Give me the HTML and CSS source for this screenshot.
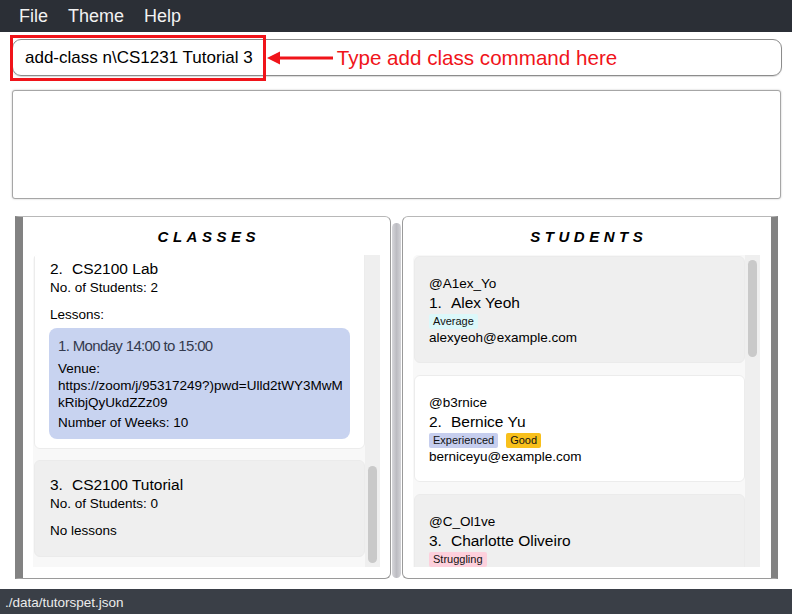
FILE: index.html
```html
<!DOCTYPE html>
<html lang="en">
<head>
<meta charset="utf-8">
<title>TutorsPet</title>
<link rel="stylesheet" href="styles.css">
</head>
<body>
<div class="app">
  <nav class="menubar">
    <span class="menu-item">File</span>
    <span class="menu-item">Theme</span>
    <span class="menu-item">Help</span>
  </nav>

  <div class="command-box">
    <div class="command-highlight">add-class n\CS1231 Tutorial 3</div>
    <svg class="arrow" width="66" height="14" viewBox="0 0 66 14" aria-hidden="true">
      <polygon points="0,7 13,0.5 13,13.5" fill="#f0141a"/>
      <line x1="12" y1="7" x2="66" y2="7" stroke="#f0141a" stroke-width="3"/>
    </svg>
    <span class="annotation">Type add class command here</span>
  </div>

  <div class="result-display"></div>

  <main class="panels">
    <section class="panel panel-left">
      <h2 class="panel-title">CLASSES</h2>
      <div class="list">
        <div class="list-viewport">
          <div class="list-content scrolled">
            <article class="card card-white">
              <div class="card-title"><span class="idx">2.</span>CS2100 Lab</div>
              <div class="line">No. of Students: 2</div>
              <div class="line lessons-label">Lessons:</div>
              <div class="lesson">
                <div class="lesson-time">1. Monday 14:00 to 15:00</div>
                <div class="line venue-label">Venue:</div>
                <div class="line url">https://zoom/j/95317249?)pwd=Ulld2tWY3MwMkRibjQyUkdZZz09</div>
                <div class="line weeks">Number of Weeks: 10</div>
              </div>
            </article>
            <article class="card card-gray">
              <div class="card-title"><span class="idx">3.</span>CS2100 Tutorial</div>
              <div class="line">No. of Students: 0</div>
              <div class="line lessons-label no-lessons">No lessons</div>
            </article>
          </div>
        </div>
        <div class="scrollbar scrollbar-end"><div class="thumb"></div></div>
      </div>
    </section>

    <div class="splitter"></div>

    <section class="panel panel-right">
      <h2 class="panel-title">STUDENTS</h2>
      <div class="list">
        <div class="list-viewport">
          <div class="list-content">
            <article class="card card-gray student">
              <div class="line">@A1ex_Yo</div>
              <div class="card-title"><span class="idx">1.</span>Alex Yeoh</div>
              <div class="tags"><span class="tag tag-average">Average</span></div>
              <div class="line">alexyeoh@example.com</div>
            </article>
            <article class="card card-white student">
              <div class="line">@b3rnice</div>
              <div class="card-title"><span class="idx">2.</span>Bernice Yu</div>
              <div class="tags"><span class="tag tag-experienced">Experienced</span><span class="tag tag-good">Good</span></div>
              <div class="line">berniceyu@example.com</div>
            </article>
            <article class="card card-gray student">
              <div class="line">@C_Ol1ve</div>
              <div class="card-title"><span class="idx">3.</span>Charlotte Oliveiro</div>
              <div class="tags"><span class="tag tag-struggling">Struggling</span></div>
            </article>
          </div>
        </div>
        <div class="scrollbar scrollbar-start"><div class="thumb"></div></div>
      </div>
    </section>
  </main>

  <footer class="statusbar">./data/tutorspet.json</footer>
</div>
</body>
</html>
```

FILE: styles.css
```css
* {
  box-sizing: border-box;
}

html, body {
  margin: 0;
  padding: 0;
  background: #ffffff;
}

body {
  font-family: "Liberation Sans", Arial, sans-serif;
  color: #000;
}

.app {
  width: 792px;
  height: 614px;
  display: flex;
  flex-direction: column;
  overflow: hidden;
}

/* Menu bar */
.menubar {
  height: 32px;
  flex: 0 0 32px;
  background: #2b2f36;
  display: flex;
  align-items: center;
  padding-left: 9px;
}

.menu-item {
  color: #f2f2f2;
  font-size: 18px;
  padding: 0 10px;
  line-height: 32px;
}

/* Command box */
.command-box {
  height: 37px;
  flex: 0 0 37px;
  margin: 7px 10px 0 12px;
  border: 1px solid #8c8c8c;
  border-radius: 9px;
  box-shadow: 0 1px 1px rgba(0, 0, 0, 0.15);
  display: flex;
  align-items: center;
}

.command-highlight {
  height: 46px;
  flex: 0 0 auto;
  margin-left: -3px;
  border: 3px solid #f0141a;
  padding: 0 10px 0 12px;
  display: flex;
  align-items: center;
  font-size: 17px;
  color: #000;
  white-space: nowrap;
}

.arrow {
  display: block;
  margin-left: 1px;
  flex: 0 0 auto;
}

.annotation {
  margin-left: 4px;
  font-size: 20.6px;
  color: #f0141a;
  white-space: nowrap;
}

/* Result display */
.result-display {
  height: 109px;
  flex: 0 0 109px;
  margin: 14px 11px 0 12px;
  border: 1px solid #a6a6a6;
  border-radius: 3px;
  box-shadow: 0 0 2px rgba(0, 0, 0, 0.25);
  background: #fff;
}

/* Panels */
.panels {
  height: 363px;
  flex: 0 0 363px;
  margin-top: 17px;
  padding: 0 14px 0 15px;
  display: flex;
}

.panel {
  width: 376px;
  flex: 0 0 376px;
  display: flex;
  flex-direction: column;
  background: #fff;
}

.panel-left {
  border-left: 8px solid #828282;
  border-top: 1px solid #b8b8b8;
  border-right: 1px solid #9a9a9a;
  border-bottom: 1px solid #9a9a9a;
  border-radius: 0 6px 6px 0;
  padding: 0 10px 11px 10px;
}

.panel-right {
  border-right: 7px solid #828282;
  border-top: 1px solid #b8b8b8;
  border-left: 1px solid #9a9a9a;
  border-bottom: 1px solid #9a9a9a;
  border-radius: 6px 0 0 6px;
  padding: 0 11px 11px 10px;
}

.splitter {
  width: 9px;
  flex: 0 0 9px;
  margin: 7px 1px 1px 1px;
  border-radius: 5px;
  background: linear-gradient(to right, #d6d6da, #bcbcc2 50%, #d2d2d6);
}

.panel-title {
  margin: 0;
  height: 38px;
  flex: 0 0 38px;
  display: flex;
  align-items: center;
  justify-content: center;
  padding-left: 4.5px;
  font-size: 15px;
  font-weight: bold;
  font-style: italic;
  letter-spacing: 4.5px;
  color: #000;
}

.list {
  height: 312px;
  flex: 0 0 312px;
  display: flex;
  background: #f8f8f8;
  border-radius: 5px 0 0 0;
  overflow: hidden;
}

.list-viewport {
  flex: 1;
  overflow: hidden;
  padding-left: 1px;
}

.list-content {
  display: flex;
  flex-direction: column;
  gap: 11px;
}

.list-content.scrolled {
  margin-top: -11px;
}

.panel-right .list-content {
  gap: 12px;
  padding-top: 1px;
}

.scrollbar {
  width: 15px;
  flex: 0 0 15px;
  background: #efefef;
  display: flex;
  flex-direction: column;
  padding: 5px 3px 4px 3px;
}

.scrollbar-end {
  justify-content: flex-end;
}

.scrollbar-start {
  justify-content: flex-start;
}

.thumb {
  height: 97px;
  border-radius: 5px;
  background: #c9c9c9;
}

/* Cards */
.card {
  border-radius: 6px;
  padding: 14px 15px 9px 15px;
  border: 1px solid transparent;
}

.card-white {
  background: #ffffff;
  border-color: #ececec;
}

.card-gray {
  background: #efefef;
  border-color: #ebebeb;
}

.card.student {
  padding: 18px 15px 15px 14px;
}

.card-title {
  font-size: 15.5px;
  line-height: 20px;
  white-space: nowrap;
}

.card.student .card-title {
  line-height: 19px;
}

.idx {
  margin-right: 9px;
}

.line {
  font-size: 13.5px;
  line-height: 18px;
}

.lessons-label {
  margin-top: 9px;
}

.no-lessons {
  margin-bottom: 7px;
}

.lesson {
  margin: 4px -1px 0 -1px;
  background: #c8d3f0;
  border-radius: 8px;
  padding: 8px 5px 8px 9px;
}

.lesson .line {
  line-height: 17px;
}

.lesson-time {
  font-size: 15px;
  line-height: 20px;
  letter-spacing: -0.65px;
  color: #343a4e;
  white-space: nowrap;
}

.venue-label {
  margin-top: 4px;
}

.url {
  word-break: break-all;
}

.weeks {
  margin-top: 3px;
}

.tags {
  display: flex;
  gap: 8px;
  margin-top: 2px;
}

.tag {
  font-size: 11px;
  line-height: 15px;
  height: 15px;
  padding: 0 4px;
  border-radius: 2px;
  color: #111;
}

.tag-average {
  background: #dcf8fa;
}

.tag-experienced {
  background: #c6ceee;
}

.tag-good {
  background: #f8c01c;
}

.tag-struggling {
  background: #fdd0dc;
}

/* Status bar */
.statusbar {
  height: 25px;
  flex: 0 0 25px;
  margin-top: 10px;
  background: #3a3f47;
  color: #ececec;
  font-size: 13.5px;
  line-height: 27px;
  padding-left: 5px;
}
```
